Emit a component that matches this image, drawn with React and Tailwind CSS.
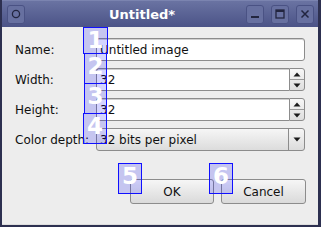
import React from "react";

function Up() {
  return (
    <svg width="8" height="5" viewBox="0 0 8 5"><path d="M0.5 4.5 L4 0.5 L7.5 4.5 Z" fill="#1a1a1a" /></svg>
  );
}
function Down() {
  return (
    <svg width="8" height="5" viewBox="0 0 8 5"><path d="M0.5 0.5 L4 4.5 L7.5 0.5 Z" fill="#1a1a1a" /></svg>
  );
}

function Spin({ value }) {
  return (
    <div className="flex-1 flex h-[23px]">
      <div className="flex-1 flex items-center bg-white border border-[#8c8c8c] border-r-0 rounded-l-[3px] pl-[3px] text-[12px] text-[#111] shadow-[inset_0_1px_0_#d0d0d0]">
        {value}
      </div>
      <div className="w-[16px] flex flex-col border border-[#8c8c8c] rounded-r-[3px] bg-gradient-to-b from-[#f7f7f7] to-[#dedede]">
        <div className="flex-1 flex items-center justify-center border-b border-[#9a9a9a]"><Up /></div>
        <div className="flex-1 flex items-center justify-center"><Down /></div>
      </div>
    </div>
  );
}

function Row({ label, children }) {
  return (
    <div className="flex items-center h-[23px]">
      <div className="w-[81px] text-[12px] text-[#111] whitespace-nowrap">{label}</div>
      {children}
    </div>
  );
}

function Box({ n, cls }) {
  return (
    <div className={"absolute border border-[#1010ff] bg-[rgba(0,0,255,0.17)] flex justify-center " + cls}>
      <span className="text-white font-bold text-[23px] leading-[24px] font-['DejaVu_Sans',sans-serif]">{n}</span>
    </div>
  );
}

function TBtn({ children }) {
  return (
    <div className="w-[18px] h-[19px] rounded-[3px] bg-[#6770a0] border border-[#4a5284] flex items-center justify-center">
      {children}
    </div>
  );
}

export default function App() {
  return (
    <div className="relative w-[321px] h-[227px] bg-[#ededed] border-l-2 border-r-[3px] border-b-2 border-[#2d3050] flex flex-col font-['DejaVu_Sans',sans-serif] overflow-hidden">
      {/* title bar */}
      <div className="h-[27px] flex items-center bg-gradient-to-b from-[#6a73a2] to-[#4b5387] border-t border-[#7b84b0] shrink-0">
        <div className="ml-[5px]">
          <TBtn>
            <svg width="10" height="10" viewBox="0 0 10 10"><circle cx="5" cy="5" r="3.6" fill="none" stroke="#22253f" strokeWidth="1.3" /></svg>
          </TBtn>
        </div>
        <div className="ml-[84px] text-white font-bold text-[13px] leading-none">Untitled*</div>
        <div className="ml-auto mr-[4px] flex gap-[7px]">
          <TBtn>
            <svg width="10" height="10" viewBox="0 0 10 10"><rect x="1" y="7" width="8" height="2" fill="#22253f" /></svg>
          </TBtn>
          <TBtn>
            <svg width="10" height="10" viewBox="0 0 10 10"><rect x="1" y="1" width="8" height="8" fill="none" stroke="#22253f" strokeWidth="1.3" /><rect x="1" y="1" width="8" height="2" fill="#22253f" /></svg>
          </TBtn>
          <TBtn>
            <svg width="10" height="10" viewBox="0 0 10 10"><path d="M1.5 1.5 L8.5 8.5 M8.5 1.5 L1.5 8.5" stroke="#22253f" strokeWidth="1.5" /></svg>
          </TBtn>
        </div>
      </div>

      {/* body */}
      <div className="flex-1 flex flex-col pt-[11px] pl-[13px] pr-[13px] gap-[7px] border-b border-[#dedede]">
        <Row label="Name:">
          <div className="flex-1 h-[23px] flex items-center bg-white border border-[#8c8c8c] rounded-[3px] pl-[3px] text-[12px] text-[#111] shadow-[inset_0_1px_0_#d0d0d0]">
            Untitled image
          </div>
        </Row>
        <Row label="Width:"><Spin value="32" /></Row>
        <Row label="Height:"><Spin value="32" /></Row>
        <Row label="Color depth:">
          <div className="flex-1 h-[23px] flex border border-[#8c8c8c] rounded-[3px] bg-gradient-to-b from-[#f6f6f6] to-[#dcdcdc]">
            <div className="flex-1 flex items-center pl-[3px] text-[12px] text-[#111]">32 bits per pixel</div>
            <div className="w-[16px] flex items-center justify-center border-l border-[#8c8c8c]"><Down /></div>
          </div>
        </Row>
        <div className="flex justify-end gap-[7px] mt-[21px] mr-[-1px]">
          <div className="w-[84px] h-[25px] flex items-center justify-center border border-[#8c8c8c] rounded-[3px] bg-gradient-to-b from-[#f6f6f6] to-[#dadada] text-[12px] text-[#111]">OK</div>
          <div className="w-[85px] h-[25px] flex items-center justify-center border border-[#8c8c8c] rounded-[3px] bg-gradient-to-b from-[#f6f6f6] to-[#dadada] text-[12px] text-[#111]">Cancel</div>
        </div>
      </div>

      {/* overlay boxes */}
      <Box n="1" cls="left-[81px] top-[27px] w-[25px] h-[27px]" />
      <Box n="2" cls="left-[82px] top-[53px] w-[23px] h-[31px]" />
      <Box n="3" cls="left-[82px] top-[83px] w-[23px] h-[31px]" />
      <Box n="4" cls="left-[81px] top-[113px] w-[24px] h-[31px]" />
      <Box n="5" cls="left-[116px] top-[163px] w-[24px] h-[31px]" />
      <Box n="6" cls="left-[207px] top-[163px] w-[24px] h-[31px]" />
    </div>
  );
}
